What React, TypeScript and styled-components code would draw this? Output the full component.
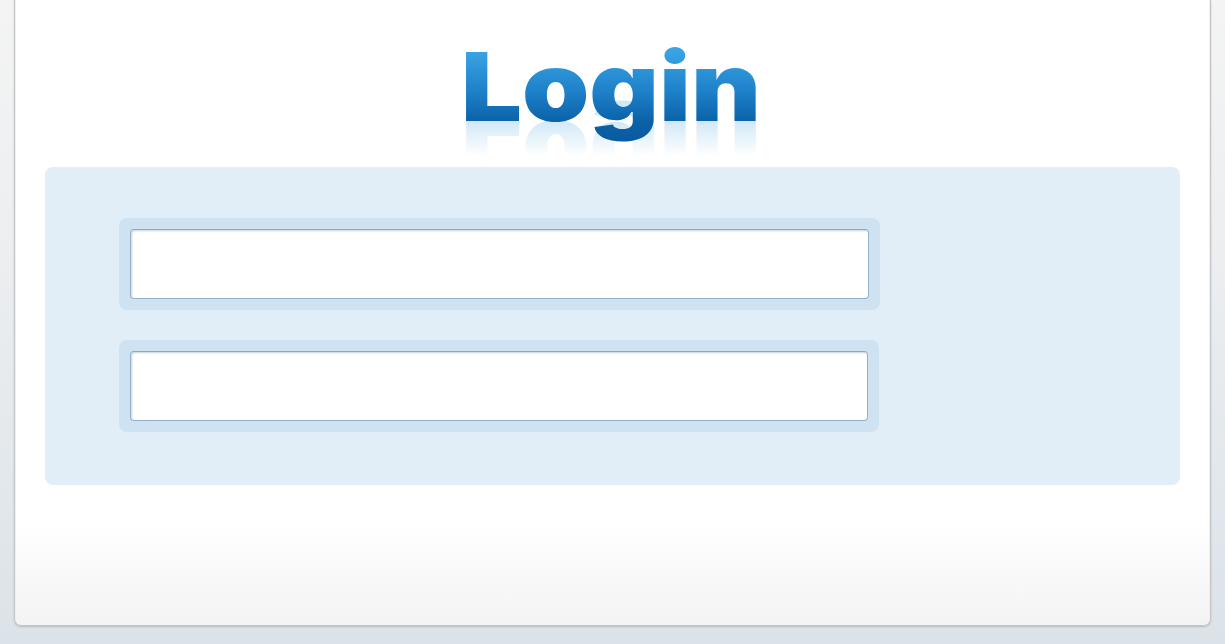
import React from "react";
import styled, { createGlobalStyle } from "styled-components";

const GlobalStyle = createGlobalStyle`
  html, body {
    margin: 0;
    padding: 0;
    height: 644px;
    overflow: hidden;
  }
  body {
    background: linear-gradient(to bottom, #f4f4f4 0%, #eceef0 40%, #dbe3e9 100%);
    font-family: "Inter", "Liberation Sans", sans-serif;
  }
`;

const Page = styled.div`
  display: flex;
  justify-content: center;
  height: 644px;
  padding: 0 14px 0 14px;
  box-sizing: border-box;
`;

const Card = styled.div`
  flex: 1;
  height: 626px;
  box-sizing: border-box;
  background: linear-gradient(to bottom, #ffffff 0%, #ffffff 84%, #f3f3f3 100%);
  border: 1px solid #c3c7ca;
  border-top: none;
  border-radius: 0 0 7px 7px;
  box-shadow: 0 1px 2px rgba(0, 0, 0, 0.18), inset 1px 0 0 #f0f0f0, inset -1px 0 0 #f0f0f0;
  display: flex;
  flex-direction: column;
  align-items: stretch;
  padding: 30px 30px 0 30px;
`;

const Logo = styled.svg`
  display: block;
  margin: 0 auto;
  width: 360px;
  height: 130px;
  flex-shrink: 0;
`;

const LogoText = styled.text`
  font-family: "Inter", "Noto Sans", sans-serif;
  font-weight: 900;
  font-size: 95px;
`;

const Panel = styled.form`
  margin-top: 7px;
  height: 318px;
  box-sizing: border-box;
  background: #e1eef8;
  border-radius: 8px;
  padding: 51px 0 0 74px;
  display: flex;
  flex-direction: column;
  gap: 30px;
`;

const FieldWrap = styled.div<{ $w: number }>`
  width: ${(p) => p.$w}px;
  height: 92px;
  box-sizing: border-box;
  padding: 11px;
  background: #cfe2f1;
  border-radius: 8px;
  display: flex;
`;

const Input = styled.input`
  flex: 1;
  min-width: 0;
  height: 70px;
  box-sizing: border-box;
  border: 1px solid #93b2c9;
  border-top-color: #8aaac2;
  border-radius: 4px;
  background: #ffffff;
  box-shadow: inset 1px 1px 2px rgba(90, 130, 160, 0.35);
  outline: none;
  padding: 0 12px;
  font-family: "Inter", sans-serif;
  font-size: 24px;
  color: #333;
`;

function LoginLogo() {
  const baseline = 91;
  const x = 28;
  const len = 300;
  return (
    <Logo viewBox="0 0 360 130" role="img" aria-label="Login">
      <defs>
        <linearGradient id="loginFill" gradientUnits="userSpaceOnUse" x1="0" y1="22" x2="0" y2="111">
          <stop offset="0" stopColor="#3aa3e4" />
          <stop offset="0.45" stopColor="#1d80c8" />
          <stop offset="0.78" stopColor="#0b62a8" />
          <stop offset="1" stopColor="#0a5b9f" />
        </linearGradient>
        <linearGradient id="loginRefl" gradientUnits="userSpaceOnUse" x1="0" y1="56" x2="0" y2={baseline}>
          <stop offset="0" stopColor="#4ea6e0" stopOpacity="0" />
          <stop offset="1" stopColor="#4ea6e0" stopOpacity="0.26" />
        </linearGradient>
      </defs>
      <LogoText
        x={x}
        y={baseline}
        textLength={len}
        lengthAdjust="spacingAndGlyphs"
        fill="url(#loginRefl)"
        transform={`translate(0 ${baseline * 2}) scale(1 -1)`}
        aria-hidden="true"
      >
        Login
      </LogoText>
      <LogoText x={x} y={baseline} textLength={len} lengthAdjust="spacingAndGlyphs" fill="url(#loginFill)">
        Login
      </LogoText>
    </Logo>
  );
}

export default function App() {
  return (
    <>
      <GlobalStyle />
      <Page>
        <Card>
          <LoginLogo />
          <Panel onSubmit={(e) => e.preventDefault()}>
            <FieldWrap $w={761}>
              <Input type="text" aria-label="Username" />
            </FieldWrap>
            <FieldWrap $w={760}>
              <Input type="password" aria-label="Password" />
            </FieldWrap>
          </Panel>
        </Card>
      </Page>
    </>
  );
}
